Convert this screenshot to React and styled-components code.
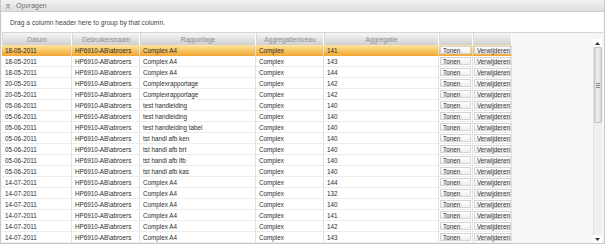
import React from 'react'
import styled, { createGlobalStyle } from 'styled-components'

const GlobalStyle = createGlobalStyle`
    html, body {
        margin: 0;
        padding: 0;
        background: #ffffff;
        overflow: hidden;
    }
    body {
        font-family: "Liberation Sans", Arial, sans-serif;
    }
`;

const columns = [
    { key: 'datum', title: 'Datum', width: 70 },
    { key: 'user', title: 'Gebruikersnaam', width: 68 },
    { key: 'rapport', title: 'Rapportage', width: 116 },
    { key: 'niveau', title: 'Aggregatieniveau', width: 68 },
    { key: 'aggr', title: 'Aggregatie', width: 115 },
    { key: 'tonen', title: '', width: 34 },
    { key: 'verw', title: '', width: 39 },
];

const rows = [
    ['18-05-2011', 'Complex A4', '141'],
    ['18-05-2011', 'Complex A4', '143'],
    ['18-05-2011', 'Complex A4', '144'],
    ['20-05-2011', 'Complexrapportage', '142'],
    ['20-05-2011', 'Complexrapportage', '142'],
    ['05-06-2011', 'test handleiding', '140'],
    ['05-06-2011', 'test handleiding', '140'],
    ['05-06-2011', 'test handleiding tabel', '140'],
    ['05-06-2011', 'tst handl afb ken', '140'],
    ['05-06-2011', 'tst handl afb brt', '140'],
    ['05-06-2011', 'tst handl afb lfb', '140'],
    ['05-06-2011', 'tst handl afb kas', '140'],
    ['14-07-2011', 'Complex A4', '144'],
    ['14-07-2011', 'Complex A4', '132'],
    ['14-07-2011', 'Complex A4', '140'],
    ['14-07-2011', 'Complex A4', '141'],
    ['14-07-2011', 'Complex A4', '142'],
    ['14-07-2011', 'Complex A4', '143'],
];

const Frame = styled.div`
    width: 603px;
    height: 243px;
    border: 1px solid #c9c9c9;
    border-top: none;
    display: flex;
    flex-direction: column;
    font-size: 6.3px;
    color: #2c2c2c;
    background: #f7f7f7;
`;

const TitleBar = styled.div`
    height: 11px;
    display: flex;
    align-items: center;
    gap: 5px;
    padding-left: 4px;
    background: linear-gradient(#f2f2f2, #dedede);
    border-bottom: 1px solid #cfcfcf;
    color: #707070;
    font-size: 7px;
`;

const GroupPanel = styled.div`
    height: 20px;
    display: flex;
    align-items: center;
    padding-left: 8px;
    margin: 0 1px;
    background: #ffffff;
    border-bottom: 1px solid #d6d6d6;
    color: #444444;
    font-size: 6.7px;
`;

const Body = styled.div`
    flex: 1;
    display: flex;
    min-height: 0;
    padding-left: 1px;
`;

const Table = styled.div`
    display: flex;
    flex-direction: column;
    background: #ffffff;
`;

const Row = styled.div`
    display: flex;
    height: 11px;
    background: ${p => (p.selected ? 'linear-gradient(#fde7a6, #f8c867 45%, #f2a634)' : '#ffffff')};
`;

const HeaderRow = styled.div`
    display: flex;
    height: 14px;
`;

const HeaderCell = styled.div`
    width: ${p => p.w}px;
    box-sizing: border-box;
    display: flex;
    align-items: center;
    justify-content: center;
    color: #8c8c8c;
    background: linear-gradient(#f6f6f6, #e4e4e4 50%, #cfcfcf);
    border-right: 1px solid #ffffff;
    border-left: 1px solid #d8d8d8;
    font-size: 6.6px;
`;

const Cell = styled.div`
    width: ${p => p.w}px;
    box-sizing: border-box;
    display: flex;
    align-items: center;
    padding-left: 3px;
    white-space: nowrap;
    overflow: hidden;
    border-right: 1px solid #e2e2e2;
    border-bottom: 1px solid ${p => (p.selected ? 'transparent' : '#ececec')};
`;

const ButtonCell = styled(Cell)`
    padding: 1px;
`;

const GridButton = styled.div`
    flex: 1;
    height: 100%;
    box-sizing: border-box;
    display: flex;
    align-items: center;
    padding-left: 2px;
    background: linear-gradient(#ffffff, #eeeeee);
    border: 1px solid #d4d4d4;
    color: #333333;
`;

const Empty = styled.div`
    flex: 1;
    background: #f7f7f7;
`;

const ScrollBar = styled.div`
    width: 9px;
    margin-right: 2px;
    padding-top: 6px;
    display: flex;
    flex-direction: column;
    align-items: center;
    background: #f7f7f7;
`;

const Arrow = styled.div`
    height: 8px;
    width: 100%;
    display: flex;
    align-items: center;
    justify-content: center;
    background: #ffffff;
`;

const Track = styled.div`
    flex: 1;
    width: 100%;
    box-sizing: border-box;
    background: #efefef;
    border-left: 1px solid #e2e2e2;
`;

const Thumb = styled.div`
    height: 76px;
    box-sizing: border-box;
    border: 1px solid #c4c4c4;
    border-radius: 1px;
    background: linear-gradient(90deg, #dcdcdc, #eeeeee 50%, #d6d6d6);
    display: flex;
    align-items: center;
    justify-content: center;
`;

const Grip = styled.div`
    width: 4px;
    height: 5px;
    background: repeating-linear-gradient(#8a8a8a 0 1px, transparent 1px 2px);
`;

const ChevronUp = () => (
    <svg width="6" height="6" viewBox="0 0 6 6">
        <polyline points="1,3 3,1 5,3" fill="none" stroke="#7a7a7a" strokeWidth="1" />
        <polyline points="1,5.5 3,3.5 5,5.5" fill="none" stroke="#7a7a7a" strokeWidth="1" />
    </svg>
);

const Tri = ({ down }) => (
    <svg width="5" height="3" viewBox="0 0 5 3">
        <polygon points={down ? '0,0 5,0 2.5,3' : '0,3 5,3 2.5,0'} fill="#333" />
    </svg>
);

const App = () => (
    <>
        <GlobalStyle />
        <Frame>
            <TitleBar>
                <ChevronUp />
                <span>Opvragen</span>
            </TitleBar>
            <GroupPanel>Drag a column header here to group by that column.</GroupPanel>
            <Body>
                <Table>
                    <HeaderRow>
                        {columns.map(c => (
                            <HeaderCell key={c.key} w={c.width}>{c.title}</HeaderCell>
                        ))}
                    </HeaderRow>
                    {rows.map((r, i) => {
                        const sel = i === 0;
                        return (
                            <Row key={i} selected={sel}>
                                <Cell w={70} selected={sel}>{r[0]}</Cell>
                                <Cell w={68} selected={sel}>HP6910-AB\abroers</Cell>
                                <Cell w={116} selected={sel}>{r[1]}</Cell>
                                <Cell w={68} selected={sel}>Complex</Cell>
                                <Cell w={115} selected={sel}>{r[2]}</Cell>
                                <ButtonCell w={34} selected={sel}><GridButton>Tonen</GridButton></ButtonCell>
                                <ButtonCell w={39} selected={sel}><GridButton>Verwijderen</GridButton></ButtonCell>
                            </Row>
                        );
                    })}
                </Table>
                <Empty />
                <ScrollBar>
                    <Arrow><Tri /></Arrow>
                    <Track>
                        <Thumb><Grip /></Thumb>
                    </Track>
                    <Arrow><Tri down /></Arrow>
                </ScrollBar>
            </Body>
        </Frame>
    </>
)

export default App
